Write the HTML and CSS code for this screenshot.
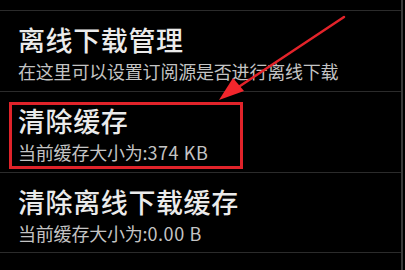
FILE: index.html
```html
<!DOCTYPE html>
<html lang="zh-CN">
<head>
    <meta charset="UTF-8">
    <meta name="viewport" content="width=device-width, initial-scale=1.0">
    <title>缓存设置</title>
    <link rel="stylesheet" href="styles.css">
</head>
<body>
    <div class="settings">
        <div class="pref-item">
            <div class="pref-title">离线下载管理</div>
            <div class="pref-summary">在这里可以设置订阅源是否进行离线下载</div>
        </div>
        <div class="pref-item">
            <div class="pref-title">清除缓存</div>
            <div class="pref-summary">当前缓存大小为:<span class="size">374 KB</span></div>
            <div class="highlight-box"></div>
        </div>
        <div class="pref-item">
            <div class="pref-title">清除离线下载缓存</div>
            <div class="pref-summary">当前缓存大小为:<span class="size">0.00 B</span></div>
        </div>

        <svg class="arrow" width="405" height="270" viewBox="0 0 405 270">
            <line x1="344" y1="17" x2="234" y2="90" stroke="#e3232a" stroke-width="2.5" stroke-linecap="round"/>
            <polygon points="219,100 244,91 233,78" fill="#f2262c"/>
        </svg>
    </div>
</body>
</html>
```

FILE: styles.css
```css
body {
    margin: 0;
    background-color: #000;
    font-family: 'Noto Sans CJK SC', 'Noto Sans', sans-serif;
    overflow: hidden;
}

.settings {
    position: relative;
    width: 401px;
    height: 270px;
    padding-top: 10px;
    border-right: 2px solid #3a3a3a;
}

.pref-item {
    position: relative;
    height: 81px;
    border-top: 1px solid #2b2b2b;
    padding-left: 18px;
    box-sizing: border-box;
    padding-top: 13px;
}

.pref-item:last-of-type {
    border-bottom: 1px solid #2b2b2b;
}

.pref-title {
    font-size: 27px;
    line-height: 32px;
    font-weight: 500;
    color: #ebebeb;
    letter-spacing: 0.6px;
}

.pref-summary {
    margin-top: 4px;
    font-size: 18px;
    line-height: 22px;
    color: #c4c4c4;
    letter-spacing: -0.2px;
}

.size {
    letter-spacing: 0.6px;
}

/* annotation overlays */
.highlight-box {
    position: absolute;
    left: 9px;
    top: 10px;
    width: 228px;
    height: 61px;
    border: 3px solid #e0232a;
}

.arrow {
    position: absolute;
    left: 0;
    top: 0;
    pointer-events: none;
}
```
